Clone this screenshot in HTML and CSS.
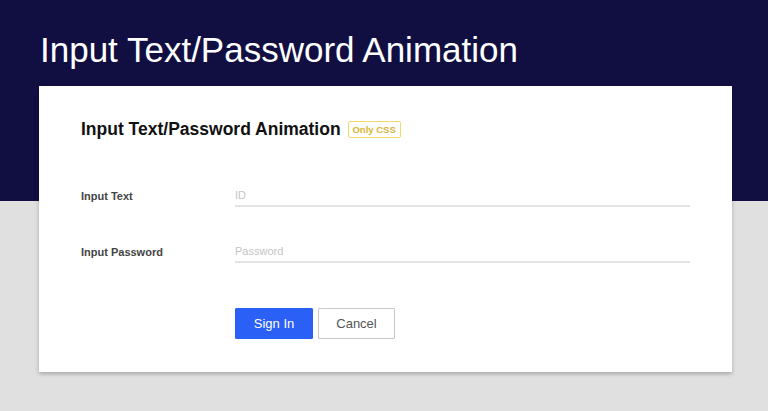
FILE: index.html
```html
<!DOCTYPE html>
<html>
<head>
<meta charset="utf-8">
<link rel="stylesheet" href="styles.css">
</head>
<body>
<h1 class="page-title">Input Text/Password Animation</h1>
<div class="card">
  <div class="card-head">
    <h2 class="card-title">Input Text/Password Animation</h2>
    <span class="badge">Only CSS</span>
  </div>
  <div class="row">
    <label class="label">Input Text</label>
    <input class="field" type="text" placeholder="ID">
  </div>
  <div class="row">
    <label class="label">Input Password</label>
    <input class="field" type="password" placeholder="Password">
  </div>
  <div class="actions">
    <button class="btn btn-primary">Sign In</button>
    <button class="btn btn-default">Cancel</button>
  </div>
</div>
</body>
</html>
```
FILE: styles.css
```css
html, body {
  margin: 0;
  padding: 0;
}
body {
  width: 768px;
  height: 411px;
  overflow: hidden;
  font-family: "Liberation Sans", Arial, sans-serif;
  background: linear-gradient(to bottom, #110f41 0, #110f41 201px, #e0e0e0 201px, #e0e0e0 100%);
}
.page-title {
  margin: 0;
  padding: 30px 0 0 40px;
  height: 86px;
  box-sizing: border-box;
  font-size: 35px;
  line-height: 40px;
  font-weight: normal;
  color: #ffffff;
}
.card {
  margin-left: 39px;
  width: 693px;
  height: 286px;
  box-sizing: border-box;
  background: #ffffff;
  padding: 34px 42px 0 42px;
  box-shadow: 0 2px 4px rgba(0,0,0,0.25);
}
.card-head {
  display: flex;
  align-items: center;
  gap: 7px;
  height: 18px;
}
.card-title {
  margin: 0;
  font-size: 17.5px;
  font-weight: bold;
  color: #111;
  line-height: 18px;
}
.badge {
  display: inline-flex;
  align-items: center;
  justify-content: center;
  box-sizing: border-box;
  width: 53px;
  height: 17px;
  border: 1px solid #f1d86a;
  border-radius: 2px;
  color: #d8b530;
  font-size: 9.5px;
  font-weight: bold;
}
.row {
  display: flex;
  align-items: flex-end;
  height: 22px;
}
.card-head + .row {
  margin-top: 48px;
}
.row + .row {
  margin-top: 34px;
}
.label {
  width: 154px;
  flex: none;
  font-size: 11px;
  font-weight: bold;
  color: #444;
  line-height: 14px;
  padding-bottom: 5px;
}
.field {
  flex: 1;
  min-width: 0;
  height: 21px;
  box-sizing: border-box;
  border: none;
  border-bottom: 2px solid #e4e4e4;
  padding: 0 0 2px 0;
  margin: 0 0 1px 0;
  font-family: "Liberation Sans", Arial, sans-serif;
  font-size: 11px;
  color: #333;
  outline: none;
  background: transparent;
}
.field::placeholder {
  color: #c4c4c4;
}
.actions {
  display: flex;
  gap: 5px;
  margin-top: 44px;
  padding-left: 154px;
}
.btn {
  height: 31px;
  box-sizing: border-box;
  font-family: "Liberation Sans", Arial, sans-serif;
  font-size: 13px;
  border-radius: 1px;
  padding: 0;
  cursor: pointer;
}
.btn-primary {
  width: 78px;
  background: #2a60f6;
  border: 1px solid #2a60f6;
  color: #ffffff;
}
.btn-default {
  width: 77px;
  background: #ffffff;
  border: 1px solid #c8c8c8;
  color: #555;
}
```
